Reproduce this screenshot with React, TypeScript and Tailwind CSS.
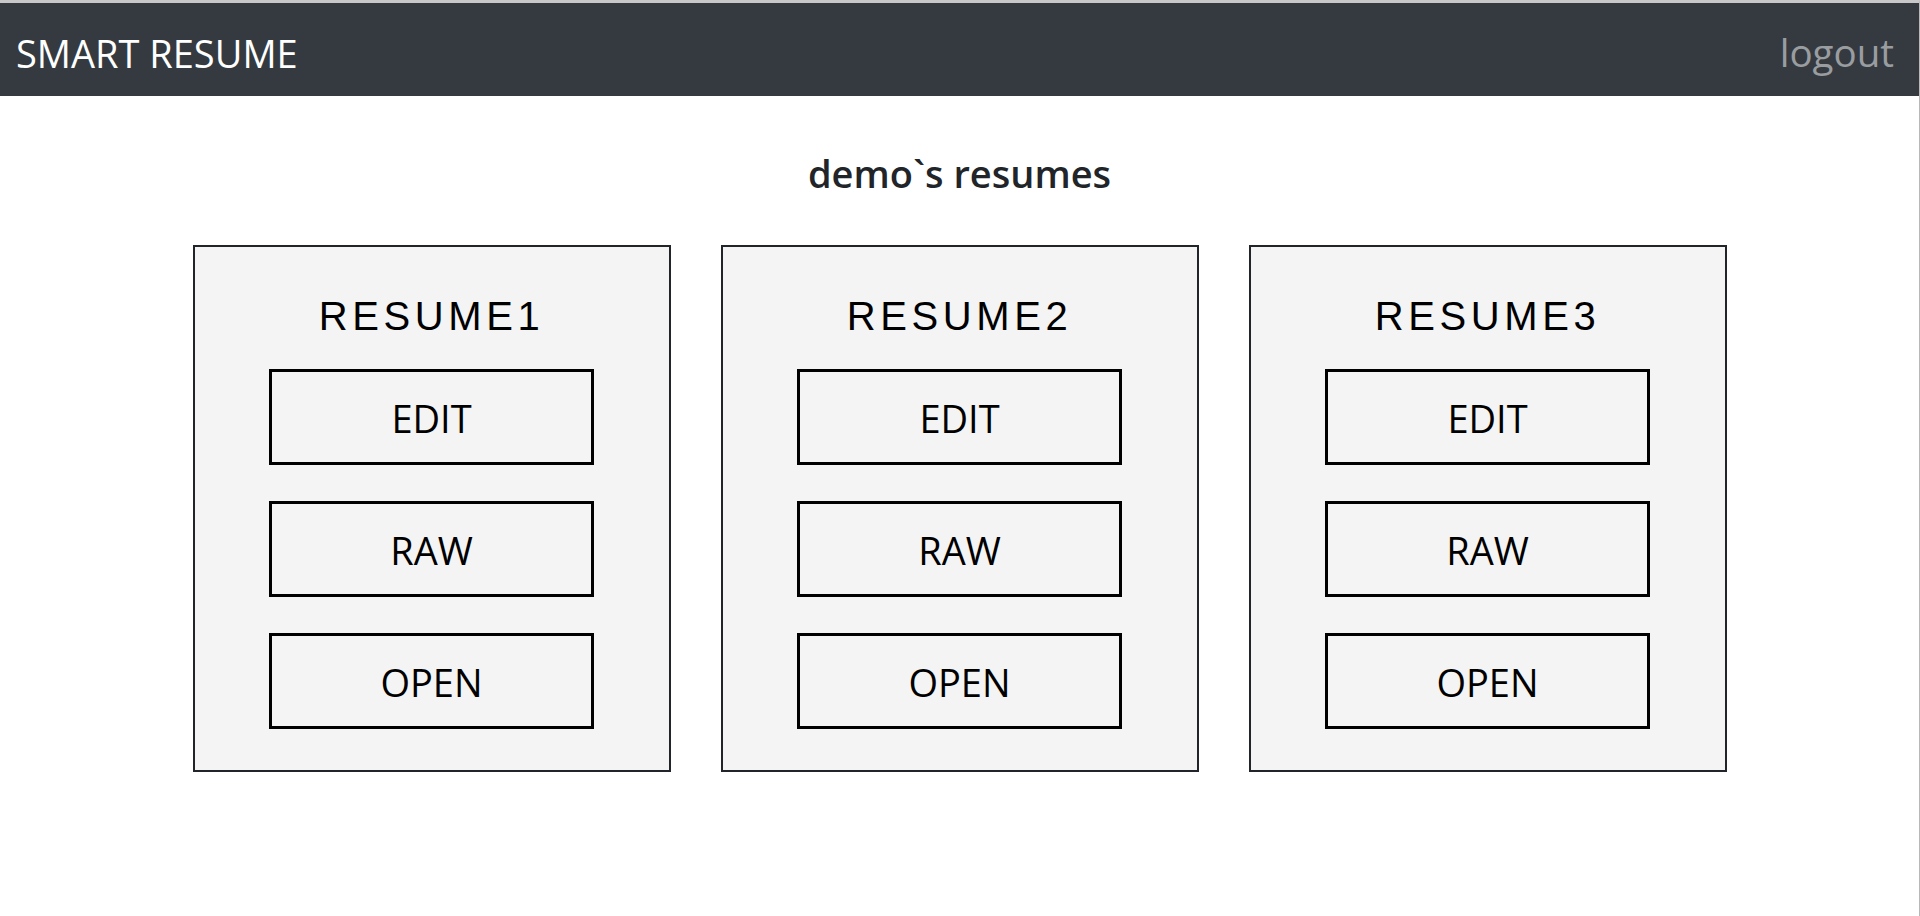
import React from "react";

const resumes = ["RESUME1", "RESUME2", "RESUME3"];
const actions = ["EDIT", "RAW", "OPEN"];

export default function App() {
  return (
    <div className="min-h-[916px] w-full bg-white border-t-[3px] border-t-[#c8c8c8] border-r border-r-[#b8b8b8] font-['Open_Sans',sans-serif]">
      <header className="h-[93px] bg-[#343a40] flex items-center justify-between pl-[16px] pr-[25px]">
        <span className="text-white text-[38px] leading-none pt-[6px]">SMART RESUME</span>
        <span className="text-[#9a9da0] text-[38.5px] leading-none pt-[6px]">logout</span>
      </header>
      <main className="flex flex-col items-center">
        <h1 className="mt-[53px] text-[38px] leading-[48px] font-semibold text-[#212529]">demo`s resumes</h1>
        <div className="mt-[48px] flex justify-center gap-[50px]">
          {resumes.map((r) => (
            <div
              key={r}
              className="w-[478px] h-[527px] border-2 border-[#212529] bg-[#f4f4f4] flex flex-col items-center pt-[39px]"
            >
              <div className="h-[60px] leading-[60px] text-[40px] tracking-[4.6px] text-black font-['Liberation_Sans',Arial,sans-serif]">
                {r}
              </div>
              <div className="mt-[23px] flex flex-col gap-[36px]">
                {actions.map((a) => (
                  <div
                    key={a}
                    className="w-[325px] h-[96px] border-[3px] border-black flex items-center justify-center text-[38px] leading-none text-black pt-[2px]"
                  >
                    {a}
                  </div>
                ))}
              </div>
            </div>
          ))}
        </div>
      </main>
    </div>
  );
}
